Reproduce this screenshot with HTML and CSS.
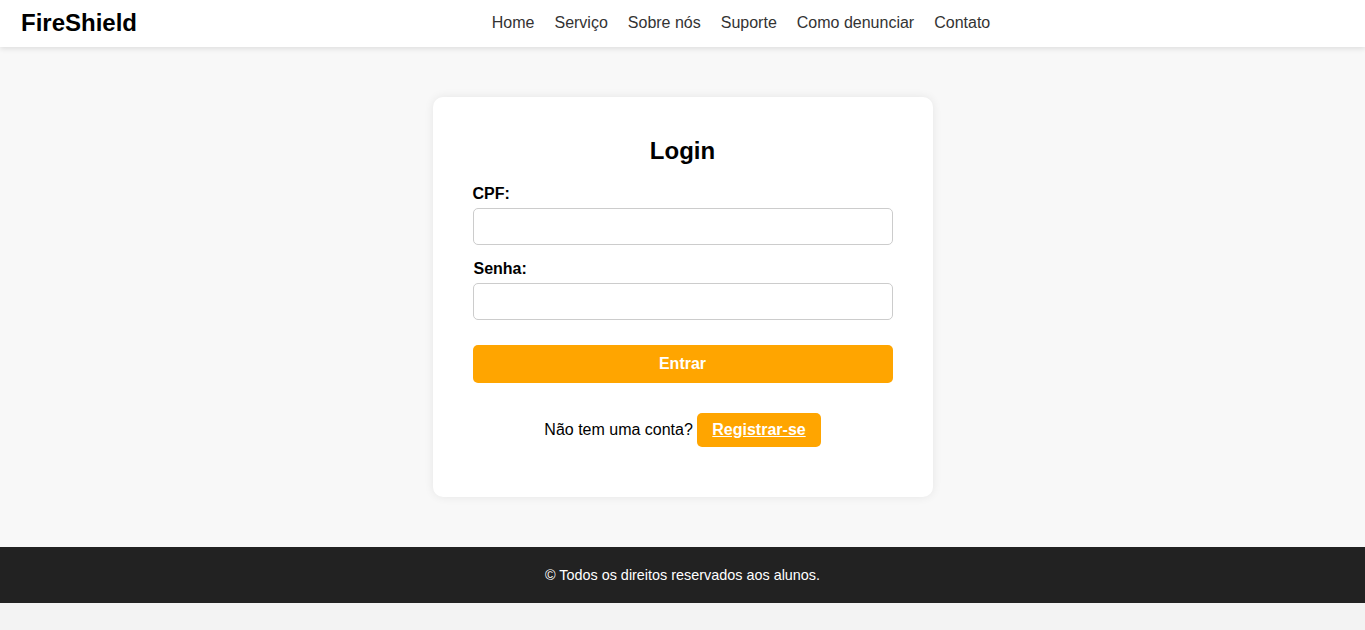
FILE: index.html
```html
<!DOCTYPE html>
<html lang="pt-BR">
<head>
<meta charset="UTF-8">
<title>FireShield - Login</title>
<link rel="stylesheet" href="styles.css">
</head>
<body>
<header class="site-header">
  <div class="logo">FireShield</div>
  <nav class="main-nav">
    <a href="#">Home</a>
    <a href="#">Serviço</a>
    <a href="#">Sobre nós</a>
    <a href="#">Suporte</a>
    <a href="#">Como denunciar</a>
    <a href="#">Contato</a>
  </nav>
  <div class="header-spacer"></div>
</header>
<main class="main">
  <div class="login-card">
    <h2 class="login-title">Login</h2>
    <form class="login-form">
      <div class="form-group">
        <label for="cpf">CPF:</label>
        <input type="text" id="cpf">
      </div>
      <div class="form-group">
        <label for="senha" class="label-senha">Senha:</label>
        <input type="password" id="senha">
      </div>
      <button type="button" class="btn-enter">Entrar</button>
    </form>
    <p class="register">Não tem uma conta? <a href="#" class="btn-register">Registrar-se</a></p>
  </div>
</main>
<footer class="site-footer">
  <p>© Todos os direitos reservados aos alunos.</p>
</footer>
</body>
</html>
```
FILE: styles.css
```css
* { box-sizing: border-box; }
body {
  margin: 0;
  font-family: "Liberation Sans", Arial, sans-serif;
  background: #f3f3f3;
  color: #000;
}
.site-header {
  display: flex;
  justify-content: space-between;
  align-items: center;
  height: 47px;
  padding: 0 20px 0 21px;
  background: #fff;
  box-shadow: 0 2px 5px rgba(0,0,0,0.1);
  position: relative;
  z-index: 1;
}
.logo {
  font-size: 24px;
  font-weight: bold;
  margin-top: -2px;
}
.main-nav {
  display: flex;
  gap: 20px;
  margin-top: -2px;
}
.main-nav a {
  color: #333;
  text-decoration: none;
  font-size: 16px;
}
.header-spacer { width: 0; }
.main {
  background: #f8f8f8;
  padding: 50px 0;
  display: flex;
  justify-content: center;
}
.login-card {
  width: 500px;
  background: #fff;
  border-radius: 10px;
  padding: 40px;
  box-shadow: 0 0 10px rgba(0,0,0,0.08);
}
.login-title {
  margin: 0 0 20px;
  text-align: center;
  font-size: 24px;
  line-height: 28px;
}
.form-group {
  display: flex;
  flex-direction: column;
  margin-bottom: 14px;
}
.form-group label {
  font-weight: bold;
  font-size: 16px;
  line-height: 18px;
  margin-bottom: 5px;
}
.label-senha { padding-left: 1px; margin-top: 1px; }
.form-group input {
  height: 37px;
  padding: 10px;
  border: 1px solid #ccc;
  border-radius: 5px;
  font-family: inherit;
  font-size: 14px;
  background: #fff;
}
.login-form { margin: 0; }
.btn-enter {
  display: block;
  width: 100%;
  margin-top: 25px;
  height: 38px;
  border: none;
  border-radius: 5px;
  background: #ffa500;
  color: #fff;
  font-family: inherit;
  font-size: 16px;
  font-weight: bold;
}
.register {
  margin: 30px 0 10px;
  text-align: center;
  font-size: 16px;
  line-height: 34px;
}
.btn-register {
  display: inline-block;
  background: #ffa500;
  color: #fff;
  font-weight: bold;
  padding: 8px 15px;
  line-height: 18px;
  border-radius: 5px;
  vertical-align: top;
}
.site-footer {
  background: #222;
  color: #fff;
  text-align: center;
  padding: 20px 0;
}
.site-footer p {
  margin: 0;
  font-size: 14.4px;
  line-height: 16px;
}
```
